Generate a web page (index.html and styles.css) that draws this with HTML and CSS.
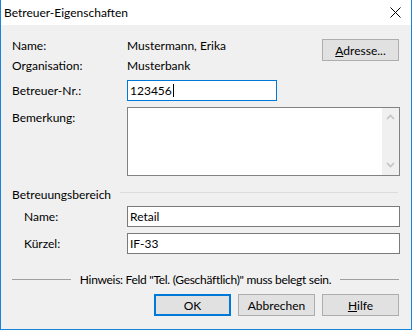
FILE: index.html
```html
<!DOCTYPE html>
<html lang="de">
<head>
    <meta charset="UTF-8">
    <title>Betreuer-Eigenschaften</title>
    <link rel="stylesheet" href="styles.css">
</head>
<body>
    <div class="window">
        <div class="titlebar">
            <span class="title">Betreuer-Eigenschaften</span>
            <span class="close">
                <svg width="11" height="11" viewBox="0 0 11 11"><path d="M0.5 0.5L10.5 10.5M10.5 0.5L0.5 10.5" stroke="#000" stroke-width="1" fill="none"/></svg>
            </span>
        </div>
        <div class="content">
            <div class="info">
                <span class="label">Name:</span>
                <span class="value">Mustermann, Erika</span>
                <div class="btn btn-address"><u>A</u>dresse...</div>
                <span class="label">Organisation:</span>
                <span class="value">Musterbank</span>
            </div>
            <div class="row">
                <span class="label">Betreuer-Nr.:</span>
                <div class="input input-nr focused">123456<span class="caret"></span></div>
            </div>
            <div class="row memo-row">
                <span class="label">Bemerkung:</span>
                <div class="memo">
                    <div class="memo-text"></div>
                    <div class="scrollbar">
                        <svg width="9" height="6" viewBox="0 0 9 6"><path d="M1 5L4.5 1.5L8 5" stroke="#c3c3c3" stroke-width="1.6" fill="none"/></svg>
                        <svg width="9" height="6" viewBox="0 0 9 6"><path d="M1 1L4.5 4.5L8 1" stroke="#c3c3c3" stroke-width="1.6" fill="none"/></svg>
                    </div>
                </div>
            </div>
            <div class="group-head"><span>Betreuungsbereich</span></div>
            <div class="row sub first">
                <span class="label">Name:</span>
                <div class="input wide">Retail</div>
            </div>
            <div class="row sub">
                <span class="label">Kürzel:</span>
                <div class="input wide">IF-33</div>
            </div>
            <div class="hint">
                <span class="hint-line"></span>
                <span class="hint-text">Hinweis: Feld "Tel. (Geschäftlich)" muss belegt sein.</span>
                <span class="hint-line"></span>
            </div>
            <div class="buttons">
                <div class="btn btn-default">OK</div>
                <div class="btn">Abbrechen</div>
                <div class="btn"><u>H</u>ilfe</div>
            </div>
        </div>
    </div>
</body>
</html>
```
FILE: styles.css
```css
* {
    margin: 0;
    padding: 0;
    box-sizing: border-box;
}
body {
    font-family: Lato, "Liberation Sans", sans-serif;
    font-size: 12px;
    color: #000;
    background: #f0f0f0;
}
.window {
    width: 412px;
    height: 330px;
    background: #f0f0f0;
    border: 1px solid #1883d7;
    border-top: none;
}
.titlebar {
    height: 25px;
    background: #fff;
    display: flex;
    align-items: center;
    justify-content: space-between;
    padding: 0 10px 0 3px;
}
.title {
    font-size: 12px;
}
.close {
    display: flex;
}
.content {
    padding: 10px 12px 0 11px;
}
.info {
    display: grid;
    grid-template-columns: 115px 1fr 77px;
    grid-template-rows: 20px 20px;
    align-items: center;
}
.btn {
    height: 22px;
    width: 77px;
    background: #e1e1e1;
    border: 1px solid #adadad;
    display: flex;
    align-items: center;
    justify-content: center;
}
.btn u {
    text-decoration-thickness: 1px;
}
.btn-address {
    grid-column: 3;
    grid-row: 1 / 3;
    align-self: start;
    margin-top: 4px;
}
.btn-default {
    border: 2px solid #0078d7;
}
.row {
    display: flex;
    align-items: center;
    margin-top: 5px;
}
.row .label {
    width: 115px;
    flex-shrink: 0;
}
.input {
    height: 21px;
    background: #fff;
    border: 1px solid #7a7a7a;
    padding-left: 2px;
    display: flex;
    align-items: center;
    flex-shrink: 0;
}
.input-nr {
    width: 150px;
}
.focused {
    border-color: #0078d7;
}
.caret {
    display: block;
    width: 1px;
    height: 13px;
    background: #000;
    margin-left: 1px;
}
.memo-row {
    align-items: flex-start;
    margin-top: 6px;
}
.memo-row .label {
    line-height: 20px;
    padding-top: 1px;
}
.memo {
    width: 273px;
    height: 69px;
    background: #fff;
    border: 1px solid #828282;
    display: flex;
    flex-shrink: 0;
}
.memo-text {
    flex: 1;
}
.scrollbar {
    width: 17px;
    background: #f0f0f0;
    display: flex;
    flex-direction: column;
    justify-content: space-between;
    align-items: center;
    padding: 6px 0 7px;
}
.group-head {
    margin-top: 8px;
    height: 20px;
    display: flex;
    align-items: center;
}
.group-head::after {
    content: "";
    flex: 1;
    height: 1px;
    background: #dcdcdc;
    margin: 0 1px 3px 9px;
}
.sub .label {
    padding-left: 12px;
}
.sub.first {
    margin-top: 2px;
}
.sub {
    margin-top: 6px;
}
.wide {
    width: 273px;
}
.hint {
    margin-top: 15px;
    height: 20px;
    display: flex;
    align-items: center;
}
.hint-line {
    flex: 1;
    height: 1px;
    background: #a0a0a0;
}
.hint-text {
    margin: 0 9px;
    letter-spacing: -0.3px;
}
.buttons {
    margin-top: 5px;
    display: flex;
    justify-content: flex-end;
    gap: 7px;
}
```
